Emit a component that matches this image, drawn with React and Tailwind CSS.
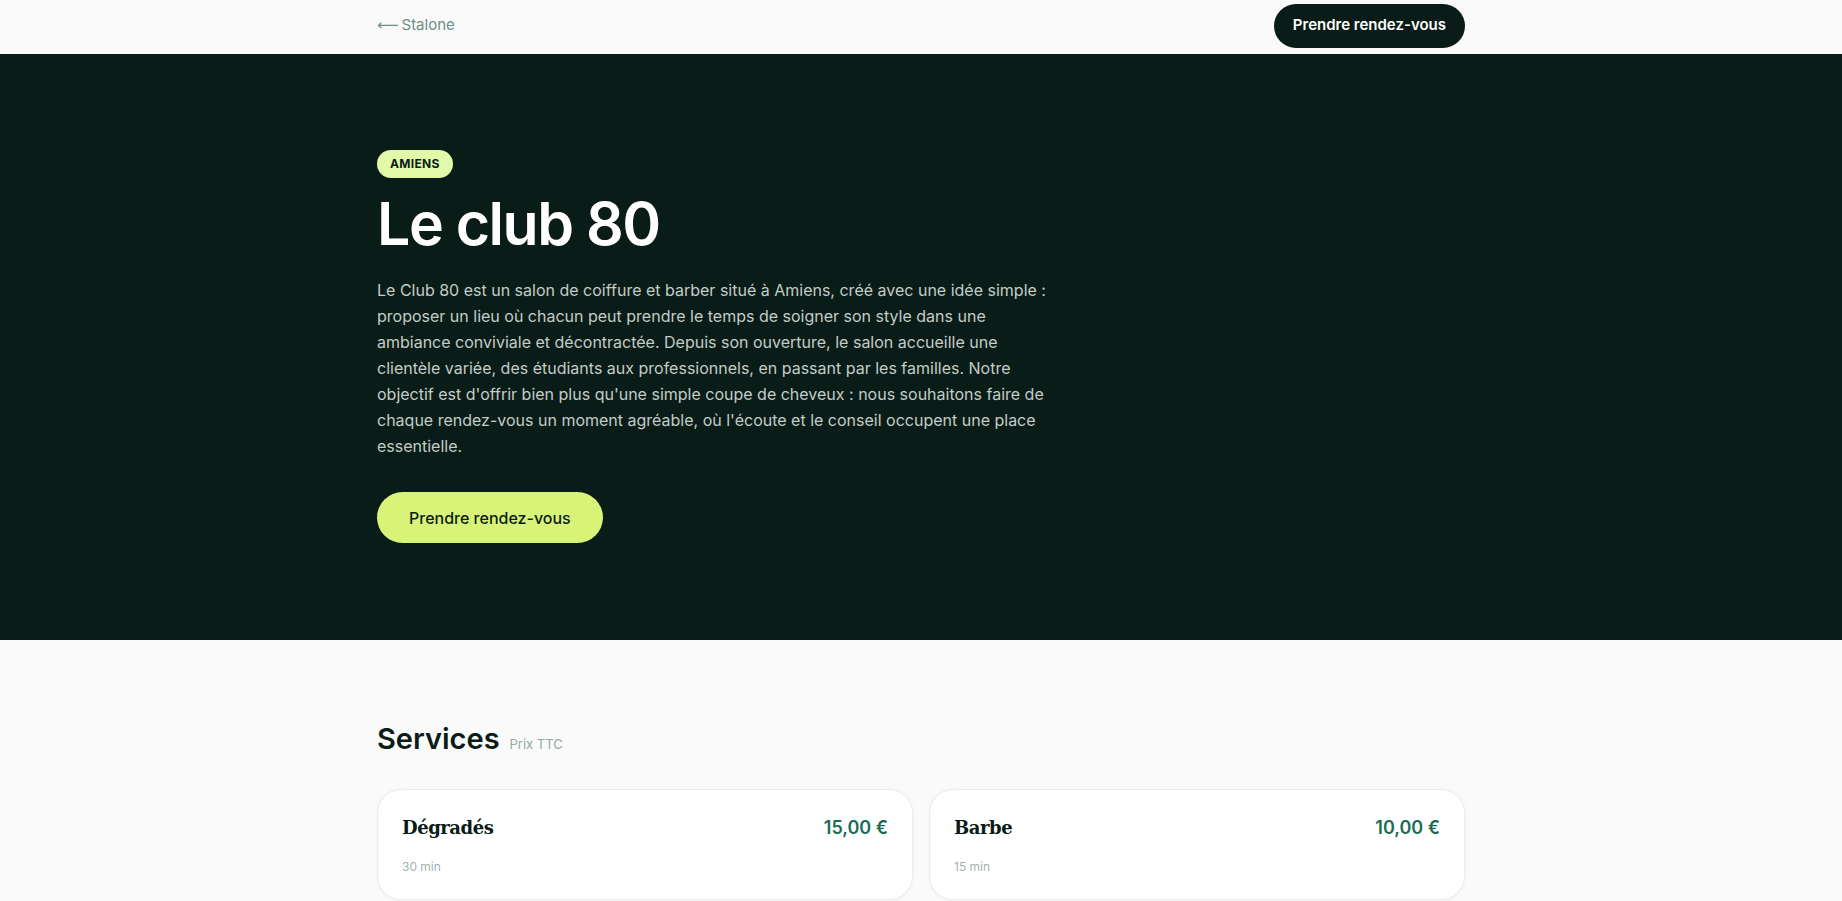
const services = [
  { name: 'Dégradés', price: '15,00 €', duration: '30 min' },
  { name: 'Barbe', price: '10,00 €', duration: '15 min' },
];

function Header() {
  return (
    <header className="bg-[#fafafa]">
      <div className="max-w-6xl mx-auto px-8 h-[54px] pt-[3px] pb-[6px] flex items-center justify-between">
        <a href="#" className="flex items-center gap-[3px] text-[15px] text-[#6f8f8a]">
          <span className="text-[15px] [font-family:'DejaVu_Sans',sans-serif]">⟵</span>
          <span>Stalone</span>
        </a>
        <button className="h-[44px] px-[19px] rounded-full bg-[#0a1c17] text-white text-[15px] font-semibold">
          Prendre rendez-vous
        </button>
      </div>
    </header>
  );
}

function Hero() {
  return (
    <section className="bg-[#0a1c17]">
      <div className="max-w-6xl mx-auto px-8 pt-24 pb-[97px]">
        <span className="inline-flex items-center h-7 px-[13px] rounded-full bg-[#e1f9a8] text-[#0a1c17] text-xs font-bold tracking-wide">
          AMIENS
        </span>
        <h1 className="mt-[14px] text-[59px] leading-[64px] font-semibold tracking-tight text-white">
          Le club 80
        </h1>
        <p className="mt-[21px] max-w-2xl text-base leading-[26px] text-[#c3ccc8]">
          Le Club 80 est un salon de coiffure et barber situé à Amiens, créé avec une idée simple : proposer un lieu où
          chacun peut prendre le temps de soigner son style dans une ambiance conviviale et décontractée. Depuis son
          ouverture, le salon accueille une clientèle variée, des étudiants aux professionnels, en passant par les
          familles. Notre objectif est d'offrir bien plus qu'une simple coupe de cheveux : nous souhaitons faire de
          chaque rendez-vous un moment agréable, où l'écoute et le conseil occupent une place essentielle.
        </p>
        <button className="mt-[33px] h-[51px] px-8 rounded-full bg-[#d8f478] text-[#0a1c17] text-base font-medium">
          Prendre rendez-vous
        </button>
      </div>
    </section>
  );
}

function ServiceCard({ service }) {
  return (
    <div className="bg-white rounded-3xl border border-[#ececec] shadow-[0_1px_4px_rgba(0,0,0,0.04)] px-6 pt-[24px] pb-6">
      <div className="flex items-center justify-between">
        <h3 className="text-lg font-bold text-[#0a1c17] [font-family:'DejaVu_Serif',serif] tracking-tight">
          {service.name}
        </h3>
        <span className="text-lg font-semibold text-[#1c6b56]">{service.price}</span>
      </div>
      <p className="mt-[17px] text-xs text-[#9fb3ae]">{service.duration}</p>
    </div>
  );
}

export default function App() {
  return (
    <div className="min-h-screen bg-[#fafafa] [font-family:Inter,'Liberation_Sans',sans-serif]">
      <Header />
      <Hero />
      <section className="bg-[#fafafa]">
        <div className="max-w-6xl mx-auto px-8 pt-[81px] pb-16">
          <div className="flex items-baseline gap-2.5">
            <h2 className="text-[29px] leading-9 font-semibold text-[#0a1c17]">Services</h2>
            <span className="text-[13px] text-[#93aba6]">Prix TTC</span>
          </div>
          <div className="mt-[32px] grid grid-cols-2 gap-4">
            {services.map((s) => (
              <ServiceCard key={s.name} service={s} />
            ))}
          </div>
        </div>
      </section>
    </div>
  );
}
